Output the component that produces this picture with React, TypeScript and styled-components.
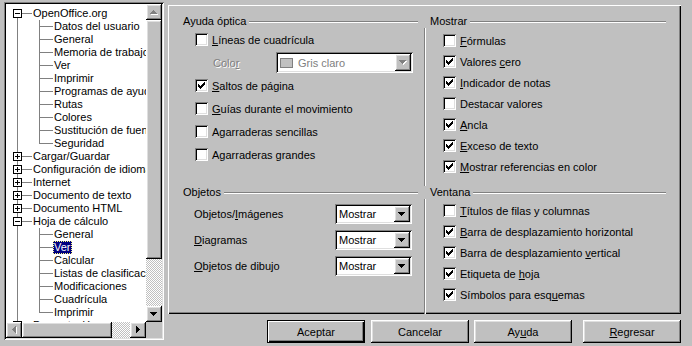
import React from "react"
import styled, { createGlobalStyle } from "styled-components"

const GlobalStyle = createGlobalStyle`
  html, body {
    margin: 0;
    padding: 0;
    background: #c0c0c0;
  }
  body {
    font-family: "Liberation Sans", Arial, sans-serif;
    font-size: 11px;
    color: #000;
  }
`

const raised = `box-shadow: inset -1px -1px #000, inset 1px 1px #fff, inset -2px -2px #808080, inset 2px 2px #dfdfdf;`
const sunken = `box-shadow: inset 1px 1px #808080, inset -1px -1px #fff, inset 2px 2px #000, inset -2px -2px #dfdfdf;`

const Dialog = styled.div`
  display: flex;
  gap: 4px;
  box-sizing: border-box;
  width: 692px;
  height: 346px;
  padding: 2px 0 0 4px;
  overflow: hidden;
`

/* ---------- tree ---------- */

const TreeFrame = styled.div`
  box-sizing: border-box;
  width: 160px;
  height: 338px;
  padding: 2px;
  display: grid;
  grid-template-columns: 140px 16px;
  grid-template-rows: 1fr 16px;
  ${sunken}
`

const TreeBody = styled.div`
  background: #fff;
  overflow: hidden;
  padding-top: 3px;
`

const TreeRow = styled.div`
  display: flex;
  align-items: center;
  height: 13px;
  white-space: nowrap;
`

const Lines = styled.svg`
  flex: none;
  display: block;
`

const TreeLabel = styled.span<{ $selected?: boolean }>`
  line-height: 13px;
  padding: 0 1px;
  background: ${p => (p.$selected ? "#000080" : "transparent")};
  color: ${p => (p.$selected ? "#fff" : "#000")};
  outline: ${p => (p.$selected ? "1px dotted #ffff80" : "none")};
  outline-offset: -1px;
`

const VScroll = styled.div`
  display: flex;
  flex-direction: column;
`

const HScroll = styled.div`
  display: flex;
`

const Track = styled.div`
  flex: 1;
  background-color: #fff;
  background-image: repeating-conic-gradient(#c0c0c0 0 25%, #fff 0 50%);
  background-size: 2px 2px;
`

const ScrollButton = styled.div`
  flex: none;
  width: 16px;
  height: 16px;
  display: flex;
  align-items: center;
  justify-content: center;
  background: #c0c0c0;
  ${raised}
`

const Thumb = styled.div<{ $size: number; $vertical?: boolean }>`
  flex: none;
  ${p => (p.$vertical ? `height: ${p.$size}px;` : `width: ${p.$size}px;`)}
  background: #c0c0c0;
  ${raised}
`

const Corner = styled.div`
  background: #c0c0c0;
`

/* ---------- page ---------- */

const RightSide = styled.div`
  display: flex;
  flex-direction: column;
  padding-top: 3px;
`

const Page = styled.div`
  box-sizing: border-box;
  width: 513px;
  height: 309px;
  padding: 10px 15px 0 9px;
  display: grid;
  grid-template-columns: 241px 242px;
  grid-template-rows: 171px 1fr;
  column-gap: 6px;
  box-shadow: inset 1px 1px #fff, inset -1px -1px #000, inset -2px -2px #808080;
`

const Group = styled.div`
  display: flex;
  flex-direction: column;
`

const GroupTitle = styled.div`
  display: flex;
  align-items: center;
  gap: 3px;
  height: 13px;
  line-height: 13px;
  padding-left: 6px;
  white-space: nowrap;

  &::after {
    content: "";
    flex: 1;
    margin-top: 1px;
    border-top: 1px solid #808080;
    border-bottom: 1px solid #fff;
  }
`

const GroupBody = styled.div<{ $divider?: boolean; $top: number; $left: number }>`
  flex: 1;
  display: flex;
  flex-direction: column;
  padding-top: ${p => p.$top}px;
  padding-left: ${p => p.$left}px;
  ${p => (p.$divider ? "border-left: 1px solid #808080; box-shadow: inset 1px 0 #fff;" : "")}
`

const Row = styled.div<{ $h: number; $indent?: number; $tight?: boolean }>`
  display: flex;
  align-items: center;
  gap: ${p => (p.$tight ? 0 : 4)}px;
  height: ${p => p.$h}px;
  padding-left: ${p => p.$indent || 0}px;
  white-space: nowrap;
`

const Box = styled.span`
  flex: none;
  width: 13px;
  height: 13px;
  box-sizing: border-box;
  background: #fff;
  display: flex;
  align-items: center;
  justify-content: center;
  ${sunken}
`

const FieldLabel = styled.span<{ $w: number; $disabled?: boolean }>`
  width: ${p => p.$w}px;
  flex: none;
  color: ${p => (p.$disabled ? "#808080" : "#000")};
  text-shadow: ${p => (p.$disabled ? "1px 1px #fff" : "none")};
`

const Key = styled.span`
  text-decoration: underline;
`

const Select = styled.div<{ $w: number; $h: number }>`
  box-sizing: border-box;
  width: ${p => p.$w}px;
  height: ${p => p.$h}px;
  padding: 2px;
  display: flex;
  align-items: stretch;
  background: #fff;
  ${sunken}
`

const SelectValue = styled.span<{ $disabled?: boolean }>`
  flex: 1;
  display: flex;
  align-items: center;
  gap: 5px;
  padding-left: 2px;
  color: ${p => (p.$disabled ? "#808080" : "#000")};
`

const Swatch = styled.span`
  width: 13px;
  height: 10px;
  box-sizing: border-box;
  border: 1px solid #808080;
  background: #c0c0c0;
`

const DropButton = styled.span`
  width: 16px;
  flex: none;
  display: flex;
  align-items: center;
  justify-content: center;
  background: #c0c0c0;
  ${raised}
`

const ButtonRow = styled.div`
  display: flex;
  justify-content: flex-end;
  margin-top: 6px;
`

const Button = styled.button<{ $default?: boolean; $gap: number }>`
  width: 98px;
  height: 23px;
  margin: 0 0 0 ${p => p.$gap}px;
  padding: 0;
  border: none;
  background: #c0c0c0;
  font: inherit;
  color: #000;
  ${p =>
    p.$default
      ? "box-shadow: inset 1px 1px #000, inset -1px -1px #000, inset 2px 2px #fff, inset -2px -2px #000, inset -3px -3px #808080;"
      : raised}
`

/* ---------- drawings ---------- */

function Check() {
  const cols = [2, 3, 4, 3, 2, 1, 0]
  return (
    <svg width={7} height={7} shapeRendering="crispEdges">
      {cols.map((y, x) => (
        <rect key={x} x={x} y={y} width={1} height={3} fill="#000" />
      ))}
    </svg>
  )
}

type Dir = "up" | "down" | "left" | "right"

const arrowPaths: Record<Dir, string> = {
  up: "M3 0h1v1h1v1h1v1h1v1H0V3h1V2h1V1h1z",
  down: "M0 0h7v1H6v1H5v1H4v1H3V3H2V2H1V1H0z",
  left: "M3 0h1v7H3V6H2V5H1V4H0V3h1V2h1V1h1z",
  right: "M0 0h1v1h1v1h1v1h1v1H3v1H2v1H1v1H0z",
}

function Arrow({ dir, disabled }: { dir: Dir; disabled?: boolean }) {
  const horizontal = dir === "left" || dir === "right"
  const w = horizontal ? 4 : 7
  const h = horizontal ? 7 : 4
  return (
    <svg width={w + 1} height={h + 1} shapeRendering="crispEdges">
      {disabled && <path d={arrowPaths[dir]} fill="#fff" transform="translate(1 1)" />}
      <path d={arrowPaths[dir]} fill={disabled ? "#808080" : "#000"} />
    </svg>
  )
}

type TreeItem = {
  label: string
  level: 0 | 1
  expander?: "plus" | "minus"
  first?: boolean
  lastChild?: boolean
  selected?: boolean
}

const treeItems: TreeItem[] = [
  { label: "OpenOffice.org", level: 0, expander: "minus", first: true },
  { label: "Datos del usuario", level: 1 },
  { label: "General", level: 1 },
  { label: "Memoria de trabajo", level: 1 },
  { label: "Ver", level: 1 },
  { label: "Imprimir", level: 1 },
  { label: "Programas de ayuda", level: 1 },
  { label: "Rutas", level: 1 },
  { label: "Colores", level: 1 },
  { label: "Sustitución de fuente", level: 1 },
  { label: "Seguridad", level: 1, lastChild: true },
  { label: "Cargar/Guardar", level: 0, expander: "plus" },
  { label: "Configuración de idioma", level: 0, expander: "plus" },
  { label: "Internet", level: 0, expander: "plus" },
  { label: "Documento de texto", level: 0, expander: "plus" },
  { label: "Documento HTML", level: 0, expander: "plus" },
  { label: "Hoja de cálculo", level: 0, expander: "minus" },
  { label: "General", level: 1 },
  { label: "Ver", level: 1, selected: true },
  { label: "Calcular", level: 1 },
  { label: "Listas de clasificación", level: 1 },
  { label: "Modificaciones", level: 1 },
  { label: "Cuadrícula", level: 1 },
  { label: "Imprimir", level: 1, lastChild: true },
  { label: "Presentación", level: 0, expander: "plus" },
]

function TreeLines({ item }: { item: TreeItem }) {
  const w = item.level === 0 ? 26 : 47
  return (
    <Lines width={w} height={13} shapeRendering="crispEdges">
      <g stroke="#808080">
        <line x1={11.5} y1={item.first ? 7 : 0} x2={11.5} y2={13} />
        {item.level === 0 ? (
          <line x1={16} y1={6.5} x2={26} y2={6.5} />
        ) : (
          <>
            <line x1={33.5} y1={0} x2={33.5} y2={item.lastChild ? 7 : 13} />
            <line x1={34} y1={6.5} x2={47} y2={6.5} />
          </>
        )}
      </g>
      {item.expander && (
        <g stroke="#000">
          <rect x={7.5} y={2.5} width={8} height={8} fill="#fff" />
          <line x1={9} y1={6.5} x2={14} y2={6.5} />
          {item.expander === "plus" && <line x1={11.5} y1={4} x2={11.5} y2={9} />}
        </g>
      )}
    </Lines>
  )
}

function CheckItem({ checked, children }: { checked?: boolean; children: React.ReactNode }) {
  return (
    <>
      <Box>{checked && <Check />}</Box>
      <span>{children}</span>
    </>
  )
}

function ListBox({ value, width, height }: { value: string; width: number; height: number }) {
  return (
    <Select $w={width} $h={height}>
      <SelectValue>{value}</SelectValue>
      <DropButton>
        <Arrow dir="down" />
      </DropButton>
    </Select>
  )
}

export default function App() {
  return (
    <>
      <GlobalStyle />
      <Dialog>
        <TreeFrame>
          <TreeBody>
            {treeItems.map((item, i) => (
              <TreeRow key={i}>
                <TreeLines item={item} />
                <TreeLabel $selected={item.selected}>{item.label}</TreeLabel>
              </TreeRow>
            ))}
          </TreeBody>
          <VScroll>
            <ScrollButton>
              <Arrow dir="up" disabled />
            </ScrollButton>
            <Thumb $vertical $size={239} />
            <Track />
            <ScrollButton>
              <Arrow dir="down" />
            </ScrollButton>
          </VScroll>
          <HScroll>
            <ScrollButton>
              <Arrow dir="left" disabled />
            </ScrollButton>
            <Thumb $size={90} />
            <Track />
            <ScrollButton>
              <Arrow dir="right" />
            </ScrollButton>
          </HScroll>
          <Corner />
        </TreeFrame>

        <RightSide>
          <Page>
            <Group>
              <GroupTitle>Ayuda óptica</GroupTitle>
              <GroupBody $top={0} $left={18}>
                <Row $h={23}>
                  <CheckItem>
                    <Key>L</Key>íneas de cuadrícula
                  </CheckItem>
                </Row>
                <Row $h={23} $indent={18} $tight>
                  <FieldLabel $w={63} $disabled>
                    Colo<Key>r</Key>
                  </FieldLabel>
                  <Select $w={137} $h={21}>
                    <SelectValue $disabled>
                      <Swatch />
                      Gris claro
                    </SelectValue>
                    <DropButton>
                      <Arrow dir="down" disabled />
                    </DropButton>
                  </Select>
                </Row>
                <Row $h={23}>
                  <CheckItem checked>
                    <Key>S</Key>altos de página
                  </CheckItem>
                </Row>
                <Row $h={23}>
                  <CheckItem>
                    <Key>G</Key>uías durante el movimiento
                  </CheckItem>
                </Row>
                <Row $h={23}>
                  <CheckItem>Agarraderas sencillas</CheckItem>
                </Row>
                <Row $h={23}>
                  <CheckItem>Agarraderas grandes</CheckItem>
                </Row>
              </GroupBody>
            </Group>

            <Group>
              <GroupTitle>Mostrar</GroupTitle>
              <GroupBody $divider $top={2} $left={18}>
                <Row $h={21}>
                  <CheckItem>
                    <Key>F</Key>órmulas
                  </CheckItem>
                </Row>
                <Row $h={21}>
                  <CheckItem checked>
                    Valores <Key>c</Key>ero
                  </CheckItem>
                </Row>
                <Row $h={21}>
                  <CheckItem checked>
                    <Key>I</Key>ndicador de notas
                  </CheckItem>
                </Row>
                <Row $h={21}>
                  <CheckItem>Destacar valores</CheckItem>
                </Row>
                <Row $h={21}>
                  <CheckItem checked>
                    <Key>A</Key>ncla
                  </CheckItem>
                </Row>
                <Row $h={21}>
                  <CheckItem checked>
                    <Key>E</Key>xceso de texto
                  </CheckItem>
                </Row>
                <Row $h={21}>
                  <CheckItem checked>
                    <Key>M</Key>ostrar referencias en color
                  </CheckItem>
                </Row>
              </GroupBody>
            </Group>

            <Group>
              <GroupTitle>Objetos</GroupTitle>
              <GroupBody $top={2} $left={17}>
                <Row $h={26} $tight>
                  <FieldLabel $w={141}>
                    Objetos/<Key>I</Key>mágenes
                  </FieldLabel>
                  <ListBox value="Mostrar" width={77} height={20} />
                </Row>
                <Row $h={26} $tight>
                  <FieldLabel $w={141}>
                    <Key>D</Key>iagramas
                  </FieldLabel>
                  <ListBox value="Mostrar" width={77} height={20} />
                </Row>
                <Row $h={26} $tight>
                  <FieldLabel $w={141}>
                    <Key>O</Key>bjetos de dibujo
                  </FieldLabel>
                  <ListBox value="Mostrar" width={77} height={20} />
                </Row>
              </GroupBody>
            </Group>

            <Group>
              <GroupTitle>Ventana</GroupTitle>
              <GroupBody $divider $top={1} $left={18}>
                <Row $h={21}>
                  <CheckItem>
                    <Key>T</Key>ítulos de filas y columnas
                  </CheckItem>
                </Row>
                <Row $h={21}>
                  <CheckItem checked>
                    <Key>B</Key>arra de desplazamiento horizontal
                  </CheckItem>
                </Row>
                <Row $h={21}>
                  <CheckItem checked>
                    Barra de desplazamiento <Key>v</Key>ertical
                  </CheckItem>
                </Row>
                <Row $h={21}>
                  <CheckItem checked>
                    Etiqueta de <Key>h</Key>oja
                  </CheckItem>
                </Row>
                <Row $h={21}>
                  <CheckItem checked>
                    Símbolos para esq<Key>u</Key>emas
                  </CheckItem>
                </Row>
              </GroupBody>
            </Group>
          </Page>

          <ButtonRow>
            <Button $default $gap={0}>
              Aceptar
            </Button>
            <Button $gap={6}>Cancelar</Button>
            <Button $gap={5}>
              Ay<Key>u</Key>da
            </Button>
            <Button $gap={11}>
              <Key>R</Key>egresar
            </Button>
          </ButtonRow>
        </RightSide>
      </Dialog>
    </>
  )
}
